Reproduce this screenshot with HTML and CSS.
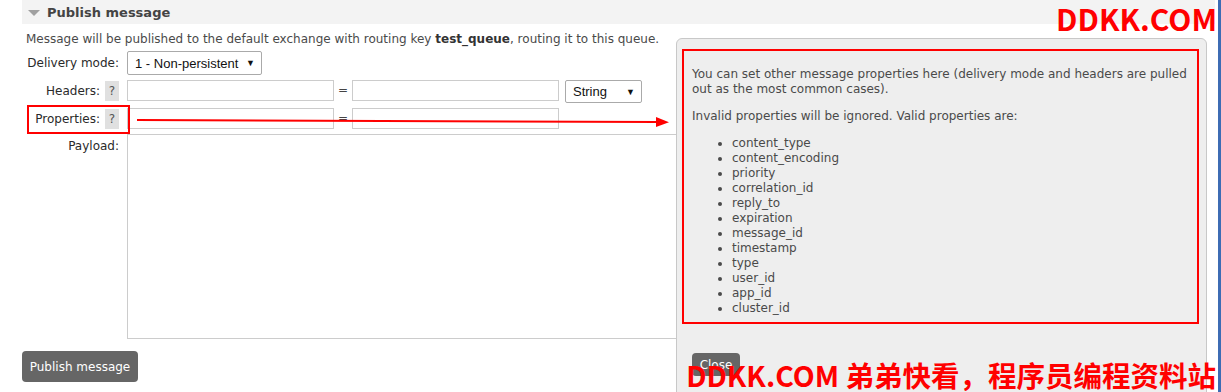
FILE: index.html
```html
<!DOCTYPE html>
<html lang="en">
<head>
    <meta charset="UTF-8">
    <title>Publish message</title>
    <link rel="stylesheet" href="styles.css">
</head>
<body>
    <div class="window">
        <div class="section">
            <div class="section-head">
                <span class="toggle"></span>
                <h2>Publish message</h2>
            </div>

            <div class="section-body">
                <p class="intro">Message will be published to the default exchange with routing key <b>test_queue</b>, routing it to this queue.</p>

                <div class="form">
                    <div class="row row-delivery">
                        <label class="label">Delivery mode:</label>
                        <div class="select select-mode">
                            <span>1 - Non-persistent</span>
                            <span class="caret">&#9660;</span>
                        </div>
                    </div>

                    <div class="row row-headers">
                        <label class="label">Headers: <span class="help">?</span></label>
                        <input type="text" class="field">
                        <span class="eq">=</span>
                        <input type="text" class="field">
                        <div class="select select-type">
                            <span>String</span>
                            <span class="caret">&#9660;</span>
                        </div>
                    </div>

                    <div class="row row-props">
                        <label class="label">Properties: <span class="help">?</span></label>
                        <input type="text" class="field">
                        <span class="eq">=</span>
                        <input type="text" class="field">
                    </div>

                    <div class="row row-payload">
                        <label class="label">Payload:</label>
                        <textarea class="payload"></textarea>
                    </div>
                </div>

                <button class="btn btn-publish">Publish message</button>
            </div>
        </div>

        <div class="popup">
            <p>You can set other message properties here (delivery mode and headers are pulled out as the most common cases).</p>
            <p>Invalid properties will be ignored. Valid properties are:</p>
            <ul>
                <li>content_type</li>
                <li>content_encoding</li>
                <li>priority</li>
                <li>correlation_id</li>
                <li>reply_to</li>
                <li>expiration</li>
                <li>message_id</li>
                <li>timestamp</li>
                <li>type</li>
                <li>user_id</li>
                <li>app_id</li>
                <li>cluster_id</li>
            </ul>
            <button class="btn btn-close">Close</button>
        </div>

        <!-- annotations drawn over the screenshot -->
        <div class="mark mark-props"></div>
        <div class="mark mark-popup"></div>
        <svg class="mark-arrow" width="545" height="20" viewBox="0 0 545 20">
            <line x1="7" y1="10" x2="528" y2="12" stroke="#ff0000" stroke-width="2"/>
            <polygon points="526,7 539,12.2 526,17" fill="#ff0000"/>
        </svg>
        <div class="stamp stamp-top">DDKK.COM</div>
        <div class="stamp stamp-bottom">DDKK.COM 弟弟快看，程序员编程资料站</div>
    </div>
</body>
</html>
```

FILE: styles.css
```css
:root {
    --text: #333333;
    --muted: #4a4a4a;
    --line: #cccccc;
    --panel: #eeeeee;
    --btn: #666666;
    --mark: #ff0000;
}

html, body {
    margin: 0;
    padding: 0;
    background: #ffffff;
}

body {
    font-family: 'DejaVu Sans', Verdana, sans-serif;
    font-size: 12px;
    color: var(--text);
}

.window {
    position: relative;
    width: 1218px;
    height: 392px;
    border-right: 3px solid #3d6cb4;
    overflow: hidden;
}

.section-head {
    margin-left: 22px;
    margin-right: 3px;
    height: 24px;
    background: #f3f3f3;
    display: flex;
    align-items: center;
    padding-left: 6px;
    gap: 7px;
}

.toggle {
    width: 0;
    height: 0;
    border-left: 6px solid transparent;
    border-right: 6px solid transparent;
    border-top: 6px solid #a0a0a0;
    margin-top: 1px;
}

.section-head h2 {
    margin: 0;
    font-size: 13px;
    font-weight: bold;
    color: #444444;
}

.section-body {
    margin-left: 22px;
}

.intro {
    margin: 8px 0 0 4px;
    line-height: 15px;
    color: var(--muted);
}

.intro b {
    color: #333333;
}

.form {
    margin-top: 4px;
}

.row {
    display: flex;
    align-items: flex-start;
    margin-bottom: 5px;
}

.label {
    width: 97px;
    flex-shrink: 0;
    margin-right: 8px;
    display: flex;
    justify-content: flex-end;
    align-items: center;
    gap: 5px;
    white-space: nowrap;
    color: #2a2a2a;
}

.row-delivery .label {
    height: 23px;
}

.row-headers .label,
.row-props .label {
    height: 21px;
}

.row-payload .label {
    padding-top: 5px;
}

.help {
    width: 14px;
    height: 20px;
    background: #e0e0e0;
    color: #555555;
    display: flex;
    align-items: center;
    justify-content: center;
    font-size: 12px;
}

.field {
    width: 207px;
    height: 21px;
    box-sizing: border-box;
    border: 1px solid var(--line);
    background: #ffffff;
    margin: 0;
    padding: 0 3px;
}

.eq {
    width: 18px;
    text-align: center;
    line-height: 21px;
    color: #444444;
}

.select {
    box-sizing: border-box;
    display: flex;
    align-items: center;
    justify-content: space-between;
    border: 1px solid #aaaaaa;
    border-radius: 2px;
    background: #ffffff;
    font-family: 'Liberation Sans', Arial, sans-serif;
    font-size: 13px;
    color: #111111;
    padding: 0 6px 0 7px;
}

.select-mode {
    width: 135px;
    height: 24px;
}

.select-type {
    width: 77px;
    height: 23px;
    margin-left: 6px;
}

.caret {
    font-size: 9px;
    color: #111111;
}

.payload {
    width: 560px;
    height: 205px;
    box-sizing: border-box;
    border: 1px solid var(--line);
    margin: 0;
    resize: none;
}

.row-payload {
    margin-bottom: 0;
}

.btn {
    background: var(--btn);
    color: #ffffff;
    border: none;
    border-radius: 4px;
    font-family: 'DejaVu Sans', Verdana, sans-serif;
    font-size: 12px;
    cursor: pointer;
}

.btn-publish {
    margin-top: 12px;
    width: 116px;
    height: 31px;
    padding: 0;
}

.popup {
    position: absolute;
    left: 676px;
    top: 38px;
    width: 531px;
    height: 360px;
    box-sizing: border-box;
    background: var(--panel);
    border: 1px solid #c8c8c8;
    border-radius: 6px;
    padding: 28px 15px 15px 15px;
    color: var(--muted);
    line-height: 15px;
}

.popup p {
    margin: 0 0 12px 0;
}

.popup ul {
    margin: 0;
    padding-left: 40px;
}

.btn-close {
    margin-top: 37px;
    width: 48px;
    height: 23px;
    padding: 0;
}

.mark {
    position: absolute;
    border: 2px solid var(--mark);
    box-sizing: border-box;
}

.mark-props {
    left: 27px;
    top: 105px;
    width: 103px;
    height: 29px;
}

.mark-popup {
    left: 682px;
    top: 49px;
    width: 517px;
    height: 275px;
}

.mark-arrow {
    position: absolute;
    left: 130px;
    top: 110px;
}

.stamp {
    position: absolute;
    font-family: 'Noto Sans CJK SC', 'Noto Sans', sans-serif;
    font-weight: bold;
    color: var(--mark);
    line-height: 1.3;
    white-space: nowrap;
}

.stamp-top {
    right: 1px;
    top: -1px;
    font-size: 30px;
}

.stamp-bottom {
    right: 2px;
    top: 356px;
    font-size: 28.5px;
}
```
